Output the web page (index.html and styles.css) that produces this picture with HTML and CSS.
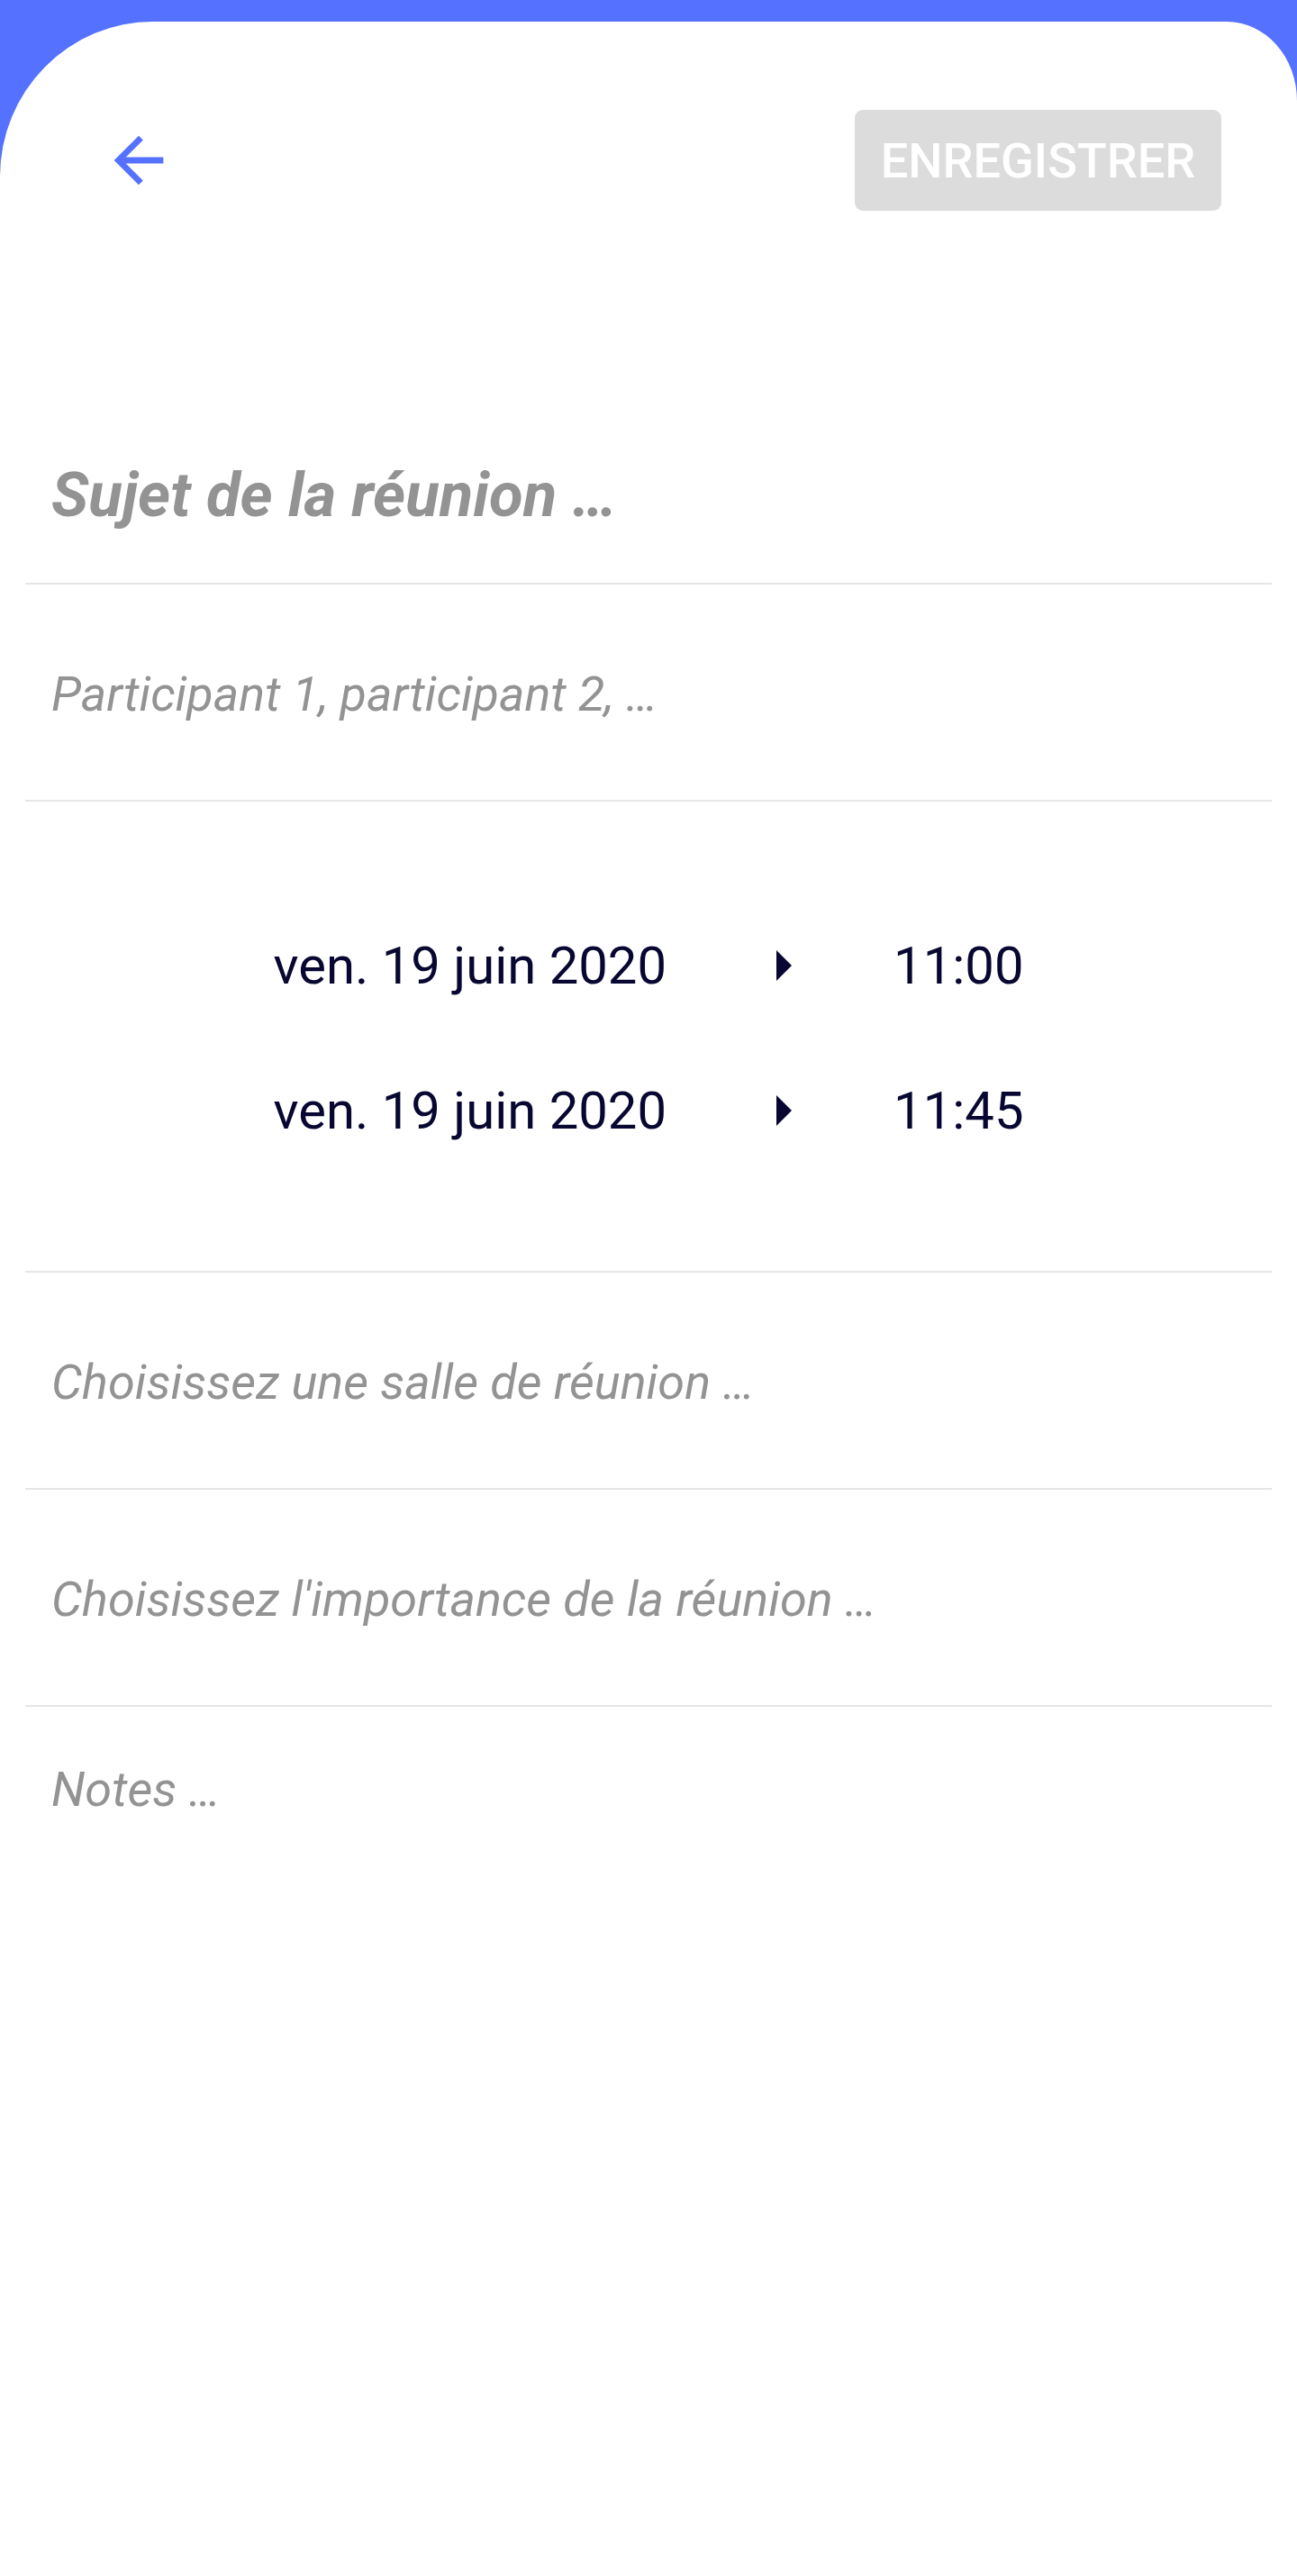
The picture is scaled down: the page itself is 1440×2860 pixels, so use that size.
FILE: index.html
```html
<!DOCTYPE html>
<html lang="fr">
<head>
<meta charset="utf-8">
<title>Nouvelle réunion</title>
<link rel="stylesheet" href="styles.css">
</head>
<body>
<div class="screen">
  <main class="card">
    <header class="toolbar">
      <button class="back" aria-label="Retour">
        <svg viewBox="0 0 24 24" width="82" height="82"><path d="M20 11H7.83l5.59-5.59L12 4l-8 8 8 8 1.41-1.41L7.83 13H20v-2z" fill="#5571ff"/></svg>
      </button>
      <button class="save" disabled>ENREGISTRER</button>
    </header>

    <div class="form">
      <div class="field title">Sujet de la réunion …</div>
      <div class="field hint">Participant 1, participant 2, …</div>
      <div class="field dates">
        <div class="date-row">
          <span class="date">ven. 19 juin 2020</span>
          <svg class="tri" viewBox="0 0 17 34" width="17" height="34"><polygon points="0,0 17,17 0,34" fill="#070731"/></svg>
          <span class="time">11:00</span>
        </div>
        <div class="date-row">
          <span class="date">ven. 19 juin 2020</span>
          <svg class="tri" viewBox="0 0 17 34" width="17" height="34"><polygon points="0,0 17,17 0,34" fill="#070731"/></svg>
          <span class="time">11:45</span>
        </div>
      </div>
      <div class="field hint">Choisissez une salle de réunion …</div>
      <div class="field hint">Choisissez l'importance de la réunion …</div>
      <div class="field notes">Notes …</div>
    </div>
  </main>
</div>
</body>
</html>
```

FILE: styles.css
```css
* { box-sizing: border-box; }
html, body {
  margin: 0;
  padding: 0;
  background: #ffffff;
}
body {
  font-family: Roboto, "Liberation Sans", sans-serif;
}
.screen {
  background: #5571ff;
  padding-top: 24px;
  min-height: 2860px;
}
.card {
  background: #ffffff;
  border-top-left-radius: 170px 172px;
  border-top-right-radius: 78px 88px;
  min-height: 2836px;
}
.toolbar {
  display: flex;
  align-items: center;
  justify-content: space-between;
  padding: 98px 84px 0 113px;
  height: 210px;
}
.back {
  border: 0;
  background: none;
  padding: 0;
  width: 82px;
  height: 82px;
  display: block;
}
.back svg { display: block; }
.save {
  border: 0;
  background: #dcdcdc;
  color: #ffffff;
  font-family: Roboto, "Liberation Sans", sans-serif;
  font-weight: 500;
  font-size: 54px;
  width: 407px;
  height: 112px;
  border-radius: 9px;
  padding: 0;
  letter-spacing: 0;
}
.form {
  margin: 0 28px;
  padding-top: 275px;
}
.field {
  padding-left: 29px;
  color: #939393;
  font-style: italic;
  line-height: normal;
  border-bottom: 2px solid #e6e6e6;
}
.title {
  font-size: 69px;
  font-weight: 700;
  padding-bottom: 57px;
}
.hint {
  font-size: 54px;
  padding-top: 90px;
  padding-bottom: 86px;
}
.dates {
  padding: 148px 0 144px 0;
  font-style: normal;
  display: flex;
  flex-direction: column;
  gap: 93px;
}
.date-row {
  display: flex;
  align-items: center;
  justify-content: center;
  color: #070731;
  font-size: 58px;
}
.tri {
  display: block;
  margin: 0 113px 0 122px;
}
.notes {
  font-size: 54px;
  padding-top: 60px;
  border-bottom: 0;
}
```
